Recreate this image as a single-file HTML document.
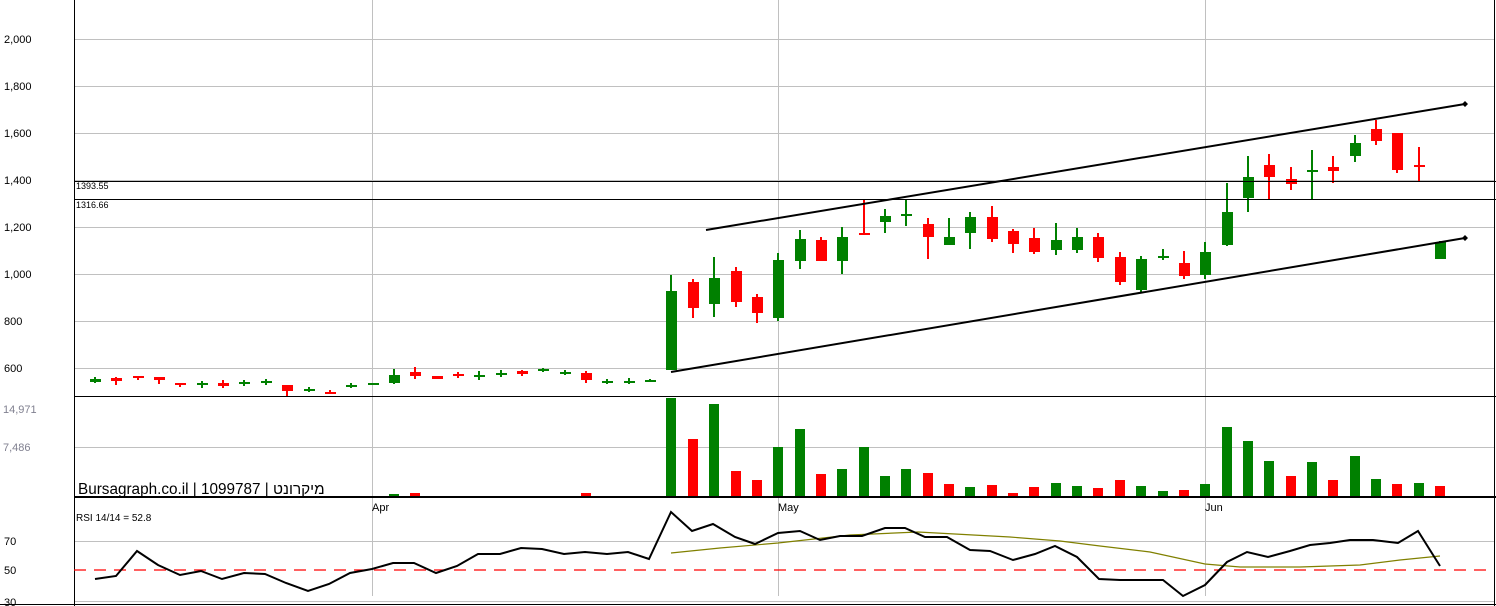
<!DOCTYPE html>
<html><head><meta charset="utf-8"><style>
html,body{margin:0;padding:0;background:#fff;width:1496px;height:606px;overflow:hidden}
svg{display:block}
text{font-family:"Liberation Sans",Arial,sans-serif}
</style></head><body>
<svg id="c" width="1496" height="606" xmlns="http://www.w3.org/2000/svg">
<rect width="1496" height="606" fill="#fff"/>
<g id="grid" stroke="#c0c0c0" stroke-width="1" shape-rendering="crispEdges">
<line x1="74" y1="39.5" x2="1494" y2="39.5"/><line x1="74" y1="86.5" x2="1494" y2="86.5"/>
<line x1="74" y1="133.5" x2="1494" y2="133.5"/><line x1="74" y1="180.5" x2="1494" y2="180.5"/>
<line x1="74" y1="227.5" x2="1494" y2="227.5"/><line x1="74" y1="274.5" x2="1494" y2="274.5"/>
<line x1="74" y1="321.5" x2="1494" y2="321.5"/><line x1="74" y1="368.5" x2="1494" y2="368.5"/>
<line x1="74" y1="447.5" x2="1494" y2="447.5"/>
<line x1="74" y1="541.5" x2="1494" y2="541.5"/><line x1="74" y1="601.5" x2="1494" y2="601.5"/>
<line x1="372.5" y1="0" x2="372.5" y2="596"/><line x1="778.5" y1="0" x2="778.5" y2="596"/><line x1="1205.5" y1="0" x2="1205.5" y2="596"/>
</g>
<g font-size="11" fill="#000">
<text x="4" y="43">2,000</text><text x="4" y="90">1,800</text><text x="4" y="137">1,600</text><text x="4" y="184">1,400</text>
<text x="4" y="231">1,200</text><text x="4" y="278">1,000</text><text x="4" y="325">800</text><text x="4" y="372">600</text>
<text x="3" y="413" fill="#808090">14,971</text><text x="3" y="451" fill="#808090">7,486</text>
<text x="4" y="545">70</text><text x="4" y="574">50</text><text x="4" y="606">30</text>
<text x="372" y="511">Apr</text><text x="778" y="511">May</text><text x="1205" y="511">Jun</text>
<text x="76" y="521" font-size="10">RSI 14/14 = 52.8</text>
<text x="76" y="189" font-size="9">1393.55</text><text x="76" y="208" font-size="9">1316.66</text>
</g>
<g id="cd"></g>
<g stroke="#000" shape-rendering="crispEdges">
<line x1="74.5" y1="0" x2="74.5" y2="606"/>
<line x1="1494.5" y1="0" x2="1494.5" y2="606"/>
<line x1="74" y1="181.5" x2="1496" y2="181.5"/>
<line x1="74" y1="199.5" x2="1496" y2="199.5"/>
<line x1="74" y1="396.5" x2="1496" y2="396.5"/>
<line x1="74" y1="497" x2="1496" y2="497" stroke-width="2"/>
<line x1="0" y1="604.5" x2="1496" y2="604.5"/>
</g>
<g stroke="#000" stroke-width="2" fill="none">
<line x1="706" y1="230" x2="1465" y2="104"/>
<line x1="671" y1="372" x2="1465" y2="238"/>
</g>
<path d="M1465 101 L1468 104 L1465 107 L1462 104Z M1465 235 L1468 238 L1465 241 L1462 238Z" fill="#000"/>
<text x="78" y="494" font-size="15.3" fill="#000" style="font-family:'Liberation Sans','Noto Sans CJK JP',sans-serif">Bursagraph.co.il | 1099787 | מיקרונט</text>
<line x1="74" y1="570" x2="1494" y2="570" stroke="#f00" stroke-width="1.3" stroke-dasharray="12,8"/>
<polyline fill="none" stroke="#808000" stroke-width="1.2" points="671,553 720,548 778,543 850,535 918,532 1010,537 1060,541 1100,546 1150,552 1205,564 1240,567 1300,567 1360,565 1400,560 1440,556"/>
<polyline fill="none" stroke="#000" stroke-width="2" points="95,579 116,576 137,551 158,565 180,575 201,571 222,579 244,573 265,574 286,583 308,591 329,584 350,573 372,569 393,563 414,563 436,573 457,566 478,554 500,554 521,548 542,549 564,554 585,552 607,554 628,552 649,559 671,512 692,531 713,524 735,537 755,544 778,533 800,531 820,540 840,536 862,536 885,528 905,528 925,537 947,537 970,550 990,551 1013,560 1035,554 1055,546 1077,557 1099,579 1120,580 1163,580 1183,596 1205,585 1227,562 1247,552 1268,557 1290,551 1310,545 1330,543 1350,540 1373,540 1398,543 1418,531 1440,566"/>
</svg>
<script>
var G="#008000",R="#ff0000";
var d=[
[G,379,382,377,383],[R,378,381,377,385],[R,376,378,376,380],[R,377,380,377,384],[R,383,385,383,387],
[G,383,385,381,388],[R,383,386,380,388],[G,382,384,380,386],[G,381,383,379,385],[R,385,391,385,396],
[G,389,391,387,392],[R,392,393,390,394],[G,385,387,383,388],[G,383,384,383,384],[G,375,383,369,384],
[R,372,376,367,379],[R,376,379,376,379],[R,374,376,372,378],[G,375,376,371,380],[G,373,375,370,377],
[R,371,374,370,376],[G,369,371,368,372],[G,372,373,370,375],[R,373,380,371,383],[G,381,383,379,384],
[G,381,382,378,384],[G,380,381,379,382],
[G,291,370,275,370],[R,282,308,279,318],[G,278,304,257,317],[R,271,302,267,307],[R,297,313,294,323],
[G,260,318,253,321],[G,239,261,230,269],[R,240,261,237,261],[G,237,261,227,274],[R,233,235,200,235],
[G,216,222,209,233],[G,214,215,199,226],[R,224,237,218,259],[G,237,245,218,245],[G,217,233,212,249],
[R,217,239,206,242],[R,231,244,229,253],[R,238,252,228,254],[G,240,250,223,255],[G,237,250,228,253],
[R,237,258,233,262],[R,257,282,252,285],[G,259,290,256,293],[G,256,258,249,260],[R,263,276,251,279],
[G,252,275,242,279],[G,212,245,183,246],[G,177,198,156,212],[R,165,177,154,199],[R,179,184,167,190],
[G,170,172,150,199],[R,167,171,156,183],[G,143,156,135,162],[R,129,141,120,145],[R,133,170,133,173],
[R,165,167,147,181],[G,242,259,241,259]];
var vol={13:[G,496],14:[G,494],15:[R,493],17:[G,496],19:[G,496],23:[R,493],24:[R,496],
27:[G,398],28:[R,439],29:[G,404],30:[R,471],31:[R,480],32:[G,447],33:[G,429],34:[R,474],35:[G,469],36:[G,447],
37:[G,476],38:[G,469],39:[R,473],40:[R,484],41:[G,487],42:[R,485],43:[R,493],44:[R,487],45:[G,483],
46:[G,486],47:[R,488],48:[R,480],49:[G,486],50:[G,491],51:[R,490],52:[G,484],53:[G,427],54:[G,441],
55:[G,461],56:[R,476],57:[G,462],58:[R,480],59:[G,456],60:[G,479],61:[R,484],62:[G,483],63:[R,486]};
var s="";
for(var i=0;i<d.length;i++){var x=Math.round(95+i*21.35),c=d[i];
s+='<rect x="'+(x-1)+'" y="'+c[3]+'" width="2" height="'+Math.max(1,c[4]-c[3])+'" fill="'+c[0]+'"/>';
s+='<rect x="'+(x-5)+'" y="'+c[1]+'" width="11" height="'+Math.max(2,c[2]-c[1])+'" fill="'+c[0]+'"/>';}
for(var k in vol){var x=Math.round(95+k*21.35),v=vol[k];
s+='<rect x="'+(x-5)+'" y="'+v[1]+'" width="10" height="'+(497-v[1])+'" fill="'+v[0]+'"/>';}
document.getElementById("cd").innerHTML=s;
</script>
</body></html>
